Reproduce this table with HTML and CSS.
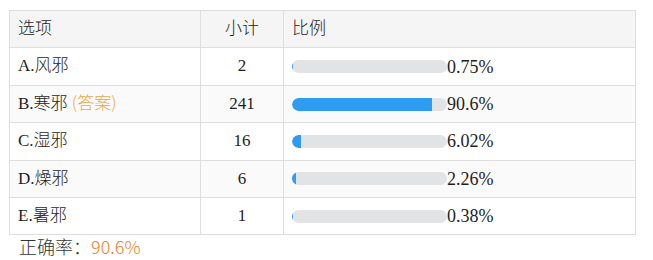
FILE: index.html
```html
<!DOCTYPE html>
<html>
<head>
<meta charset="utf-8">
<link rel="stylesheet" href="styles.css">
</head>
<body>
<div class="wrap">
  <table class="stats">
    <colgroup><col class="c1"><col class="c2"><col class="c3"></colgroup>
    <thead>
      <tr><th><span class="zh">选项</span></th><th class="num"><span class="zh">小计</span></th><th><span class="zh">比例</span></th></tr>
    </thead>
    <tbody>
      <tr><td>A.<span class="zh">风邪</span></td><td class="num">2</td><td><div class="ratio"><div class="bar"><div class="fill" style="width:0.75%"></div></div><span class="pct">0.75%</span></div></td></tr>
      <tr class="alt"><td>B.<span class="zh">寒邪</span> <span class="zh ans">(答案)</span></td><td class="num">241</td><td><div class="ratio"><div class="bar"><div class="fill" style="width:90.6%"></div></div><span class="pct">90.6%</span></div></td></tr>
      <tr><td>C.<span class="zh">湿邪</span></td><td class="num">16</td><td><div class="ratio"><div class="bar"><div class="fill" style="width:6.02%"></div></div><span class="pct">6.02%</span></div></td></tr>
      <tr class="alt"><td>D.<span class="zh">燥邪</span></td><td class="num">6</td><td><div class="ratio"><div class="bar"><div class="fill" style="width:2.26%"></div></div><span class="pct">2.26%</span></div></td></tr>
      <tr><td>E.<span class="zh">暑邪</span></td><td class="num">1</td><td><div class="ratio"><div class="bar"><div class="fill" style="width:0.38%"></div></div><span class="pct">0.38%</span></div></td></tr>
    </tbody>
  </table>
  <div class="rate">正确率：<span class="rate-val">90.6%</span></div>
</div>
</body>
</html>
```
FILE: styles.css
```css
html, body { margin: 0; padding: 0; background: #fff; }
body {
  font-family: "Liberation Serif", "Noto Sans CJK SC", serif;
  font-size: 17px;
  color: #1e1e1e;
}
.wrap { padding: 10px 0 0 9px; }
.stats {
  border-collapse: collapse;
  width: 626px;
  table-layout: fixed;
}
.c1 { width: 191px; }
.c2 { width: 83px; }
.c3 { width: 352px; }
.stats th, .stats td {
  border: 1px solid #dedede;
  padding: 7px 8px;
  height: 22.4px;
  line-height: 22.4px;
  font-weight: normal;
  text-align: left;
  vertical-align: middle;
  white-space: nowrap;
}
.zh {
  font-family: "Noto Sans CJK SC", sans-serif;
  font-size: 17px;
  font-weight: 300;
  line-height: 1;
}
.stats thead th { background: #f5f5f5; }
.stats .num { text-align: center; }
.stats tr.alt td { background: #fafafa; }
.ans { color: #e8a84c; }
.ratio { display: flex; align-items: center; height: 22.4px; }
.bar {
  width: 155px;
  height: 13px;
  border-radius: 7px;
  background: #e2e3e5;
  overflow: hidden;
  flex: none;
}
.fill { height: 100%; background: #2d9cf2; border-radius: 7px 0 0 7px; }
.pct { font-size: 18px; line-height: 1; }
.rate {
  padding: 0 0 0 10px;
  line-height: 22px;
  color: #333;
  font-family: "Noto Sans CJK SC", sans-serif;
  font-size: 18px;
  font-weight: 300;
}
.rate-val { color: #f0802a; }
```
